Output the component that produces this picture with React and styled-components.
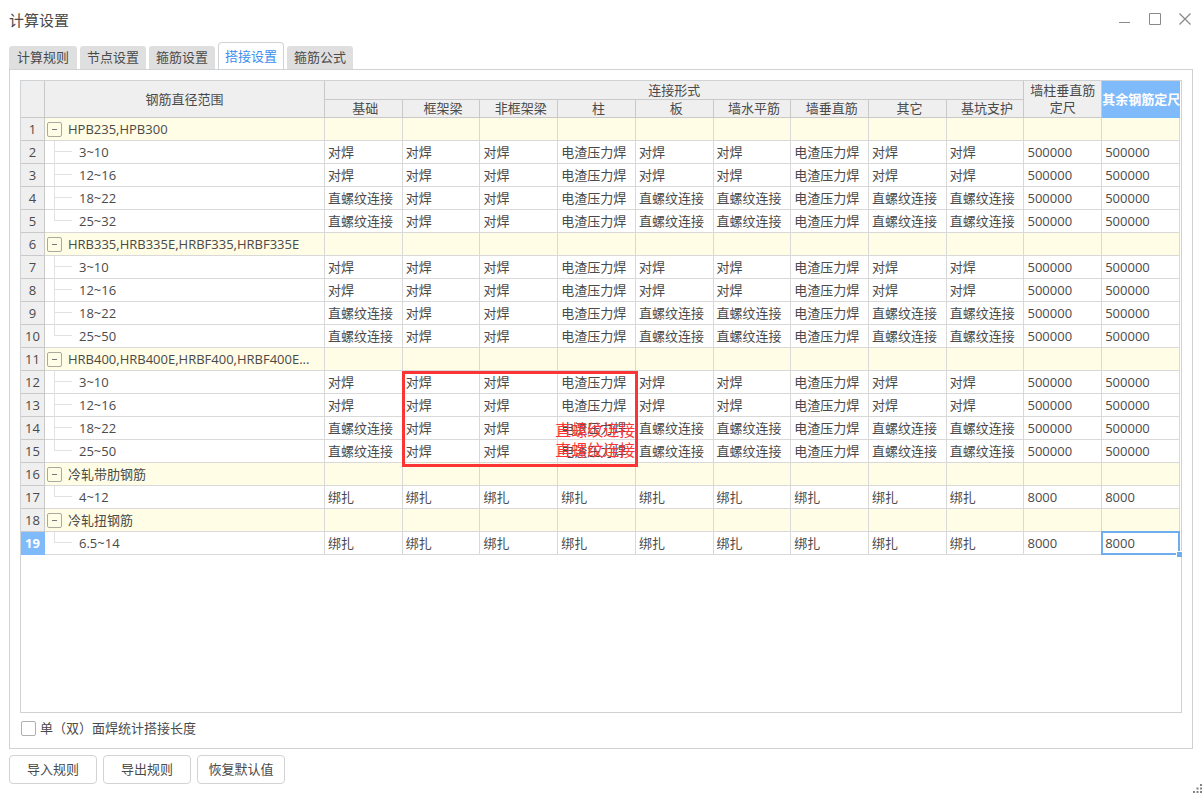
import React, { useState } from 'react';
import styled, { createGlobalStyle, css } from 'styled-components';

const COLOURS = {
    text: '#4a4a4a',
    accent: '#3a8ef0',
    selected: '#7fbafb',
    cellFocus: '#6eaeee',
    frame: '#cfd3d6',
    grid: '#d9d9d9',
    headerGrid: '#c9c9c9',
    header: '#efefef',
    group: '#fffde5',
    mark: '#fb3535'
};

const TABS = ['计算规则', '节点设置', '箍筋设置', '搭接设置', '箍筋公式'];

const JOINTS = ['基础', '框架梁', '非框架梁', '柱', '板', '墙水平筋', '墙垂直筋', '其它', '基坑支护'];

const D = '对焊';
const Z = '电渣压力焊';
const L = '直螺纹连接';
const B = '绑扎';

const THIN = [D, D, D, Z, D, D, Z, D, D, '500000', '500000'];
const THICK = [L, D, D, Z, L, L, Z, L, L, '500000', '500000'];
const TIED = [B, B, B, B, B, B, B, B, B, '8000', '8000'];

const GROUPS = [
    {
        name: 'HPB235,HPB300',
        rows: [['3~10', THIN], ['12~16', THIN], ['18~22', THICK], ['25~32', THICK]]
    },
    {
        name: 'HRB335,HRB335E,HRBF335,HRBF335E',
        rows: [['3~10', THIN], ['12~16', THIN], ['18~22', THICK], ['25~50', THICK]]
    },
    {
        name: 'HRB400,HRB400E,HRBF400,HRBF400E...',
        rows: [['3~10', THIN], ['12~16', THIN], ['18~22', THICK], ['25~50', THICK]]
    },
    { name: '冷轧带肋钢筋', rows: [['4~12', TIED]] },
    { name: '冷轧扭钢筋', rows: [['6.5~14', TIED]] }
];

// flatten the groups so that every line gets its number
const LINES = GROUPS.flatMap(({ name, rows }) => [
    { name, group: true },
    ...rows.map(([range, values], i) => ({ name: range, values, last: i === rows.length - 1 }))
]).map((line, i) => ({ ...line, no: i + 1 }));

const CURRENT = { row: 19, col: 10 };

const GlobalStyle = createGlobalStyle`
    * {
        box-sizing: border-box;
    }

    body {
        margin: 0;
        background-color: #fff;
        color: ${COLOURS.text};
        font-family: "Open Sans", "Noto Sans CJK SC", sans-serif;
        font-size: 13px;
        line-height: 17px;
    }

    button, input {
        font: inherit;
        color: inherit;
    }
`;

const Line = ({ line }) => (
    <tr>
        <LineNo scope="row" $current={line.no === CURRENT.row}>{line.no}</LineNo>
        {line.group ? (
            <GroupCell>
                <GroupName>
                    <Toggle aria-label={`收起 ${line.name}`} />
                    {line.name}
                </GroupName>
            </GroupCell>
        ) : (
            <RangeCell $last={line.last}>{line.name}</RangeCell>
        )}
        {line.group
            ? [...JOINTS, 'a', 'b'].map(key => <Cell key={key} $group />)
            : line.values.map((value, col) => (
                <Cell key={col}>
                    {value}
                    {line.no === CURRENT.row && col === CURRENT.col && <CellCursor />}
                    {line.no === 12 && col === 1 && <MarkBox />}
                    {line.no === 14 && col === 3 && <MarkText>{L}<br />{L}</MarkText>}
                </Cell>
            ))}
    </tr>
);

const App = () => {
    const [tab, setTab] = useState(3);
    const [checked, setChecked] = useState(false);

    return (
        <Dialog>
            <GlobalStyle />
            <TitleBar>
                <Title>计算设置</Title>
                <WindowButton aria-label="最小化">
                    <svg width="12" height="12"><path d="M0 9.5h11" /></svg>
                </WindowButton>
                <WindowButton aria-label="最大化">
                    <svg width="12" height="12"><path d="M.5.5h11v11H.5z" /></svg>
                </WindowButton>
                <WindowButton aria-label="关闭">
                    <svg width="12" height="12"><path d="M.5.5l11 11M11.5.5l-11 11" strokeWidth="1.3" /></svg>
                </WindowButton>
            </TitleBar>
            <Tabs role="tablist">
                {TABS.map((name, i) => (
                    <Tab key={name} role="tab" aria-selected={i === tab} $active={i === tab} onClick={() => setTab(i)}>
                        {name}
                    </Tab>
                ))}
            </Tabs>
            <Panel>
                <TableFrame>
                    <Table>
                        <colgroup>
                            <NoCol />
                            <NameCol />
                            {[...JOINTS, 'a', 'b'].map(key => <col key={key} />)}
                        </colgroup>
                        <thead>
                            <tr>
                                <Head rowSpan={2} />
                                <Head rowSpan={2}>钢筋直径范围</Head>
                                <Head colSpan={9}>连接形式</Head>
                                <Head rowSpan={2}>墙柱垂直筋<br />定尺</Head>
                                <Head rowSpan={2} $current>其余钢筋定尺</Head>
                            </tr>
                            <tr>
                                {JOINTS.map(name => <SubHead key={name}>{name}</SubHead>)}
                            </tr>
                        </thead>
                        <tbody>
                            {LINES.map(line => <Line key={line.no} line={line} />)}
                        </tbody>
                    </Table>
                </TableFrame>
                <Option>
                    <CheckBox type="checkbox" checked={checked} onChange={e => setChecked(e.target.checked)} />
                    单（双）面焊统计搭接长度
                </Option>
            </Panel>
            <Footer>
                <Button>导入规则</Button>
                <Button>导出规则</Button>
                <Button>恢复默认值</Button>
                <Grip width="9" height="9" aria-hidden="true">
                    <path d="M7 0h2v2H7zM7 3.5h2v2H7zM7 7h2v2H7zM3.5 3.5h2v2h-2zM3.5 7h2v2h-2zM0 7h2v2H0z" />
                </Grip>
            </Footer>
        </Dialog>
    );
};

const Dialog = styled.main`
    min-height: 100vh;
    display: flex;
    flex-direction: column;
    padding: 0 9px;
`;

const TitleBar = styled.header`
    display: flex;
    align-items: center;
    gap: 18px;
    height: 38px;
    padding-right: 2px;
`;

const Title = styled.h1`
    flex: 1;
    margin: 0;
    padding-top: 2px;
    font-size: 15px;
    font-weight: 400;
`;

const WindowButton = styled.button`
    display: flex;
    padding: 0;
    border: none;
    background: none;

    svg {
        fill: none;
        stroke: #8a8a8a;
    }
`;

const Tabs = styled.div`
    display: flex;
    align-items: flex-end;
    gap: 3px;
    height: 32px;
    margin-bottom: -1px;
`;

const Tab = styled.button`
    height: 23px;
    margin-bottom: 1px;
    padding: 0 7px;
    border: none;
    border-radius: 3px 3px 0 0;
    background-color: #dfdfdf;
    line-height: 23px;

    &:first-child {
        padding: 0 8px;
    }

    ${({ $active }) => $active && css`
        height: 28px;
        margin-bottom: 0;
        padding: 0 6px;
        border: 1px solid ${COLOURS.frame};
        border-bottom: none;
        border-radius: 4px 4px 0 0;
        background-color: #fff;
        color: ${COLOURS.accent};
    `}
`;

const Panel = styled.section`
    flex: 1;
    display: flex;
    flex-direction: column;
    padding: 10px 10px 0;
    border: 1px solid ${COLOURS.frame};
`;

const TableFrame = styled.div`
    flex: 1;
    padding-right: 1px;
    border: 1px solid ${COLOURS.frame};
`;

const Table = styled.table`
    width: 100%;
    table-layout: fixed;
    border-collapse: separate;
    border-spacing: 0;
`;

const NoCol = styled.col`
    width: 24px;
`;

const NameCol = styled.col`
    width: 280px;
`;

const Head = styled.th`
    height: 19px;
    padding: 0;
    border-right: 1px solid ${COLOURS.headerGrid};
    border-bottom: 1px solid ${COLOURS.headerGrid};
    background-color: ${COLOURS.header};
    font-weight: 400;
    white-space: nowrap;

    ${({ $current }) => $current && css`
        border-color: ${COLOURS.selected};
        background-color: ${COLOURS.selected};
        color: #fff;
        font-weight: 700;
    `}
`;

const SubHead = styled(Head)`
    height: 18px;
    padding-left: 4px;
`;

const LineNo = styled(Head)`
    height: 23px;
`;

const Cell = styled.td`
    position: relative;
    height: 23px;
    padding: 0 0 0 3px;
    border-right: 1px solid ${COLOURS.grid};
    border-bottom: 1px solid ${COLOURS.grid};
    background-color: ${({ $group }) => $group ? COLOURS.group : 'transparent'};
    white-space: nowrap;
`;

const GroupCell = styled(Cell)`
    padding-left: 2px;
    background-color: ${COLOURS.group};
`;

const GroupName = styled.div`
    display: flex;
    align-items: center;
    gap: 6px;
`;

const Toggle = styled.button`
    display: flex;
    align-items: center;
    justify-content: center;
    width: 15px;
    height: 15px;
    padding: 0;
    border: 1px solid #a9a9a0;
    border-radius: 2px;
    background: none;

    &::before {
        content: "";
        width: 5px;
        height: 1px;
        background-color: #777;
    }
`;

const RangeCell = styled(Cell)`
    padding-left: 34px;

    /* tree branches */
    &::before {
        content: "";
        position: absolute;
        top: 0;
        left: 9px;
        height: ${({ $last }) => $last ? '11px' : '23px'};
        border-left: 1px solid #e2e2e2;
    }

    &::after {
        content: "";
        position: absolute;
        top: 10px;
        left: 9px;
        width: 18px;
        border-top: 1px solid #e2e2e2;
    }
`;

const CellCursor = styled.span`
    position: absolute;
    inset: -1px;
    border: 2px solid ${COLOURS.cellFocus};

    &::after {
        content: "";
        position: absolute;
        right: -4px;
        bottom: -4px;
        width: 5px;
        height: 5px;
        border: solid #fff;
        border-width: 1px 0 0 1px;
        background-color: ${COLOURS.cellFocus};
    }
`;

const MarkBox = styled.span`
    position: absolute;
    z-index: 1;
    top: 0;
    left: -1px;
    width: calc(300% + 6px);
    height: calc(400% + 8px);
    border: 3px solid ${COLOURS.mark};
    pointer-events: none;
`;

const MarkText = styled.span`
    position: absolute;
    z-index: 2;
    top: 3px;
    left: -3px;
    color: ${COLOURS.mark};
    font-size: 16px;
    line-height: 20px;
    pointer-events: none;
`;

const Option = styled.label`
    display: flex;
    align-items: center;
    align-self: flex-start;
    gap: 4px;
    height: 35px;
    padding: 0 0 4px 1px;
`;

const CheckBox = styled.input`
    appearance: none;
    width: 15px;
    height: 15px;
    margin: 0;
    border: 1px solid #b0b0b0;
    border-radius: 2px;

    &:checked {
        background-color: ${COLOURS.accent};
    }
`;

const Footer = styled.footer`
    display: flex;
    gap: 6px;
    height: 46px;
    padding-top: 6px;
    margin-right: -9px;
`;

const Button = styled.button`
    width: 88px;
    height: 29px;
    padding: 0;
    border: 1px solid #d3d3d3;
    border-radius: 4px;
    background-color: #fff;
`;

const Grip = styled.svg`
    align-self: flex-end;
    margin: 0 0 2px auto;
    fill: #808488;
`;

export default App;
